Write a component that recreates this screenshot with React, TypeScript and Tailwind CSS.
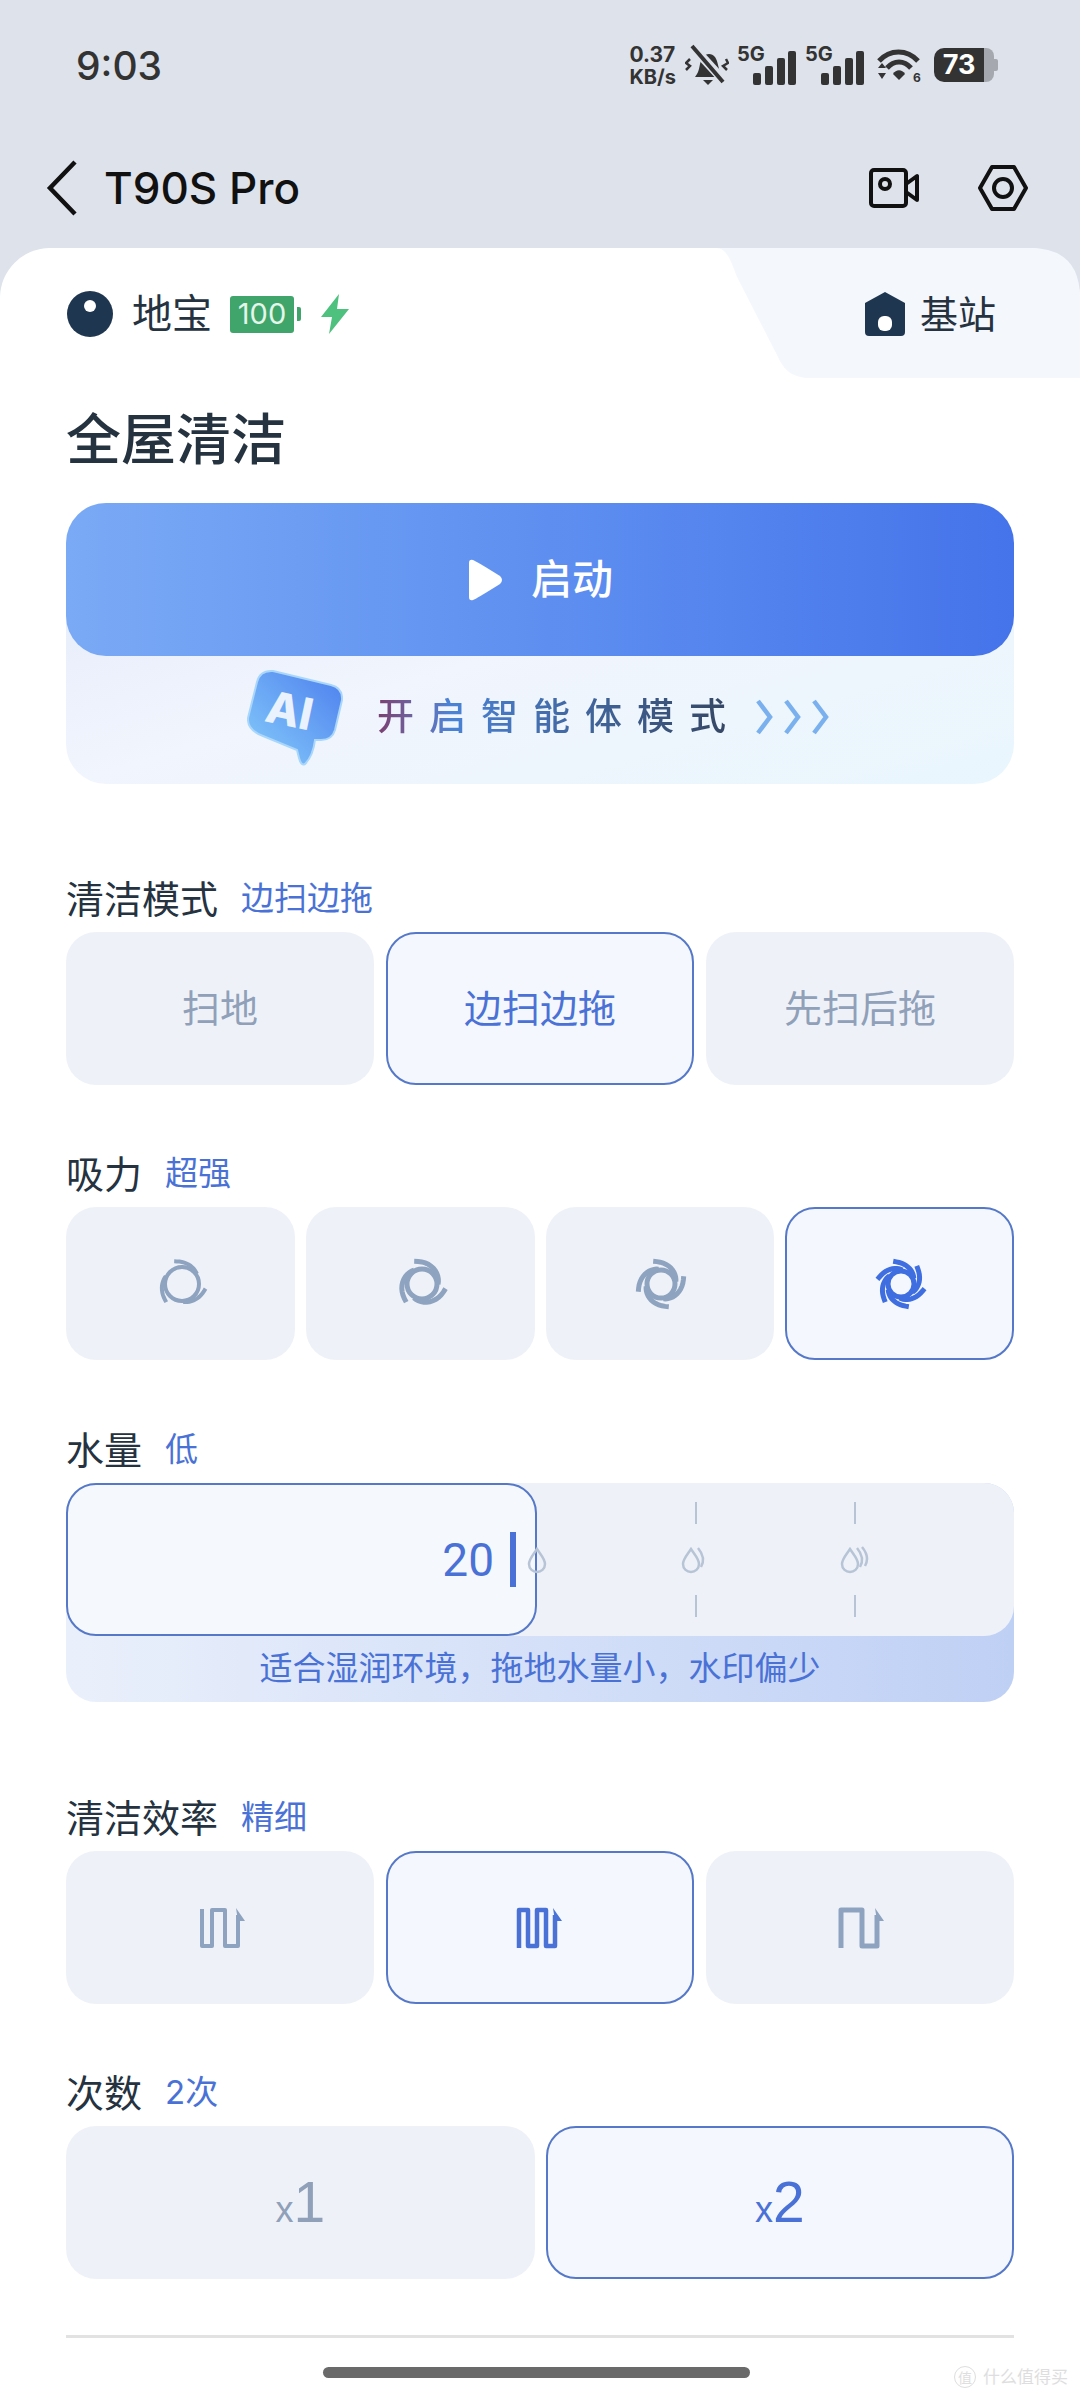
const cjk = { fontFamily: 'Inter, "Noto Sans CJK SC", sans-serif' }

const Bars = () => (
  <svg width="43" height="34" viewBox="0 0 43 34" fill="#333">
    <rect x="0" y="22" width="8" height="12" rx="2" />
    <rect x="12" y="15" width="8" height="19" rx="2" />
    <rect x="24" y="7" width="8" height="27" rx="2" />
    <rect x="35" y="0" width="8" height="34" rx="2" />
  </svg>
)

const StatusBar = () => (
  <div className="h-[128px] flex items-center justify-between pl-[76px] pr-[82px] pt-[2px]">
    <span className="text-[39px] font-medium text-[#333] leading-none">9:03</span>
    <div className="flex items-center gap-[9px] text-[#333]">
      <div className="flex flex-col font-bold text-[21px] leading-[22px] pt-[2px]">
        <span>0.37</span>
        <span className="text-[20px]">KB/s</span>
      </div>
      <svg width="44" height="42" viewBox="0 0 44 42" fill="none">
        <path d="M12 30 C15 26 14 18 18 13 C21 9 27 9 30 13 C33 17 33 24 36 30 L38 33 H10 Z" fill="#333" />
        <path d="M18 36 H28 L23 41 Z" fill="#333" />
        <path d="M7 2 L40 38" stroke="#dde2eb" strokeWidth="9" />
        <path d="M7 2 L38 38" stroke="#333" strokeWidth="4" />
        <path d="M5 15 L1 19 L5 22 L1 26" stroke="#333" strokeWidth="2.5" />
        <path d="M41 15 L43 19 L38 22 L42 26" stroke="#333" strokeWidth="2.5" />
      </svg>
      <div className="flex items-end gap-[9px] -ml-[1px]">
        <div className="relative w-[59px] h-[40px]">
          <span className="absolute left-0 -top-[2px] font-bold text-[20px] leading-[22px]">5G</span>
          <div className="absolute right-0 bottom-0"><Bars /></div>
        </div>
        <div className="relative w-[59px] h-[40px]">
          <span className="absolute left-0 -top-[2px] font-bold text-[20px] leading-[22px]">5G</span>
          <div className="absolute right-0 bottom-0"><Bars /></div>
        </div>
      </div>
      <svg width="46" height="36" viewBox="0 0 46 36" fill="none" className="ml-[3px]">
        <path d="M3 14 C14 2 31 2 42 14" stroke="#333" strokeWidth="5" />
        <path d="M11 21 C18 13 28 13 35 21" stroke="#333" strokeWidth="5" />
        <path d="M17 27 C20 22 26 22 29 27 L23 33 Z" fill="#333" />
        <path d="M2 21 L6 16 L10 21 Z M2 26 L10 26 L6 32 Z" fill="#333" />
        <text x="37" y="35" fontSize="12" fontWeight="700" fill="#333" fontFamily="Inter">6</text>
      </svg>
      <div className="flex items-center h-[34px] ml-[3px]">
        <div className="w-[50px] h-[34px] bg-[#333] rounded-l-[10px] flex items-center justify-center text-white font-bold text-[27px]">73</div>
        <div className="w-[10px] h-[34px] bg-[#a5a8ae] rounded-r-[8px]" />
        <div className="w-[4px] h-[12px] bg-[#a5a8ae] rounded-r-[2px]" />
      </div>
    </div>
  </div>
)

const NavBar = () => (
  <div className="h-[120px] flex items-center pl-[46px] pr-[52px]">
    <svg width="32" height="56" viewBox="0 0 32 56" fill="none">
      <path d="M29 2 L4 28 L29 54" stroke="#111" strokeWidth="4.5" />
    </svg>
    <span className="ml-[26px] text-[44px] font-medium text-[#111] leading-none">T90S Pro</span>
    <svg className="ml-auto" width="50" height="40" viewBox="0 0 50 40" fill="none" stroke="#111" strokeWidth="4" strokeLinejoin="round">
      <rect x="2" y="2" width="35" height="36" rx="3" />
      <circle cx="16" cy="16" r="5" />
      <path d="M37 16 L48 8 V32 L37 24" />
    </svg>
    <svg className="ml-[59px]" width="50" height="46" viewBox="0 0 50 46" fill="none" stroke="#111" strokeWidth="4" strokeLinejoin="round">
      <path d="M14 2 H36 L48 23 L36 44 H14 L2 23 Z" />
      <circle cx="25" cy="23" r="9" />
    </svg>
  </div>
)

const Label = ({ title, value }: { title: string; value: string }) => (
  <div className="h-[46px] mb-[10px] flex items-center">
    <span className="text-[38px] text-[#25323f]">{title}</span>
    <span className="ml-[23px] text-[33px] text-[#4a72d6]">{value}</span>
  </div>
)

const Option = ({ active, className, children }: { active?: boolean; className?: string; children: React.ReactNode }) => (
  <div
    className={`h-[153px] rounded-[30px] flex items-center justify-center ${className ?? ''} ${
      active ? 'border-2 border-[#5578c8] bg-[#f4f7fd] text-[#4a72d6]' : 'bg-[#eef2f8] text-[#8fa0b8]'
    }`}
  >
    {children}
  </div>
)

// spiral arm: starts at the outer tip, winds clockwise down onto the ring
const armPath = (start: number, sweep: number, outer: number, inner: number) => {
  const points = Array.from({ length: 13 }, (_, i) => {
    const t = i / 12
    const a = ((start + sweep * t) * Math.PI) / 180
    const r = outer + (inner - outer) * Math.pow(t, 0.8)
    return `${(30 + r * Math.cos(a)).toFixed(2)} ${(30 + r * Math.sin(a)).toFixed(2)}`
  })
  return `M${points.join(' L')}`
}

const Swirl = ({ arms, color, ring, width, sweep }: { arms: number; color: string; ring: number; width: number; sweep: number }) => (
  <svg className="ml-[3px]" width="60" height="60" viewBox="0 0 60 60" fill="none" stroke={color}>
    <circle cx="30" cy="30" r={ring} strokeWidth={width} />
    {Array.from({ length: arms }).map((_, i) => (
      <path key={i} d={armPath(-109 + (360 / arms) * i, sweep, 24, ring + 1)} strokeWidth={width} />
    ))}
  </svg>
)

const Drop = ({ level }: { level: number }) => (
  <svg width={level > 0 ? 32 : 22} height="28" viewBox={level > 0 ? '0 0 32 28' : '0 0 22 28'} fill="none" stroke="#b7c4d6" strokeWidth="2.5">
    <path d="M11 3 C7 9 3 13 3 18 C3 23 7 26 11 26 C15 26 19 23 19 18 C19 13 15 9 11 3 Z" />
    {level > 0 && <path d="M18 2 C23 8 25 14 21 21" />}
    {level > 1 && <path d="M23 1 C28 7 30 13 26 20" />}
  </svg>
)

const Tick = ({ level }: { level: number }) => (
  <div className="flex-1 relative">
    <div className="absolute left-0 top-0 h-full -translate-x-1/2 flex flex-col items-center pt-[19px] pb-[19px] justify-between">
      <div className={`w-[2px] h-[22px] ${level < 0 ? '' : 'bg-[#b7c4d6]'}`} />
      <Drop level={Math.max(level, 0)} />
      <div className={`w-[2px] h-[22px] ${level < 0 ? '' : 'bg-[#b7c4d6]'}`} />
    </div>
  </div>
)

const Wave = ({ d, color, width, className }: { d: string; color: string; width: number; className?: string }) => (
  <svg className={className} width="48" height="42" viewBox="0 0 48 42" fill="none">
    <path d={d} stroke={color} strokeWidth={width} strokeLinejoin="round" />
    <path d="M37 1 L46 14 H39 Z" fill={color} />
  </svg>
)

const Times = ({ n }: { n: number }) => (
  <span className="flex items-baseline">
    <span className="text-[36px] leading-none">x</span>
    <span className="text-[57px] leading-none">{n}</span>
  </span>
)

export default function App() {
  return (
    <div className="h-[2400px] w-[1080px] bg-[#dde2eb] flex flex-col overflow-hidden relative" style={cjk}>
      <StatusBar />
      <NavBar />

      <main className="flex-1 bg-white rounded-t-[50px] relative px-[66px] pt-[36px]">
        <svg className="absolute right-0 top-0" width="364" height="130" viewBox="0 0 364 130" fill="#f4f7fc">
          <path d="M0 0 H314 Q364 0 364 50 V130 H95 C76 130 68 122 62 109 L21 29 C14 10 10 0 0 0 Z" />
        </svg>

        <div className="relative h-[60px] flex items-center">
          <svg width="48" height="48" viewBox="0 0 48 48">
            <circle cx="24" cy="24" r="23" fill="#1f3650" />
            <circle cx="24" cy="16" r="6" fill="#fff" />
          </svg>
          <span className="ml-[18px] text-[40px] text-[#25323f]">地宝</span>
          <div className="ml-[18px] flex items-center">
            <div className="w-[64px] h-[37px] bg-[#3fa56a] rounded-[3px] text-[#e4f5ea] text-[29px] flex items-center justify-center">100</div>
            <div className="ml-[3px] w-[4px] h-[14px] bg-[#3fa56a] rounded-r-[2px]" />
          </div>
          <svg className="ml-[18px]" width="32" height="40" viewBox="0 0 32 40" fill="#4ec17e">
            <path d="M20 0 L2 23 H13 L10 40 L30 15 H18 Z" />
          </svg>
          <svg className="ml-auto" width="42" height="44" viewBox="0 0 42 44">
            <path d="M21 0 L41 11 V40 Q41 44 37 44 H5 Q1 44 1 40 V11 Z" fill="#1f3650" />
            <rect x="14" y="24" width="14" height="15" rx="6" fill="#fff" />
          </svg>
          <span className="ml-[14px] mr-[18px] text-[38px] text-[#25323f]">基站</span>
        </div>

        <h1 className="mt-[60px] h-[70px] flex items-center text-[55px] font-medium text-[#25323f]">全屋清洁</h1>

        <div className="mt-[29px] rounded-[40px] bg-gradient-to-br from-[#e3e9fb] via-[#f1f5fd] to-[#e9f6fd] h-[281px]">
          <div className="h-[153px] rounded-[40px] bg-gradient-to-r from-[#7aaaf5] to-[#4573ea] flex items-center justify-center">
            <svg width="36" height="42" viewBox="0 0 36 42" fill="#fff">
              <path d="M2 4 Q2 0 6 1 Q9 2 33 17 Q37 21 33 25 Q9 40 6 41 Q2 42 2 38 Z" />
            </svg>
            <span className="ml-[28px] text-[41px] font-medium text-white">启动</span>
          </div>
          <div className="h-[128px] flex items-center justify-center -mt-[3px] pl-[2px]">
            <svg width="96" height="98" viewBox="0 0 96 98">
              <defs>
                <linearGradient id="ai" x1="1" y1="0" x2="0" y2="1">
                  <stop offset="0" stopColor="#4d7fee" />
                  <stop offset="1" stopColor="#86cdfb" />
                </linearGradient>
              </defs>
              <path
                d="M26 3 L84 17 Q96 20 95 32 L88 62 Q85 72 74 72 L68 72 Q66 88 58 96 Q54 98 52 90 L50 82 L16 68 Q0 62 1 50 L10 14 Q13 2 26 3 Z"
                fill="url(#ai)"
                stroke="#a9d6fb"
                strokeWidth="2"
              />
              <text x="19" y="58" fontSize="44" fontWeight="800" fill="#eaf2fd" fontFamily="Inter" transform="rotate(12 42 44)">AI</text>
            </svg>
            <span className="ml-[34px] text-[37px] font-medium tracking-[15px] text-transparent bg-clip-text bg-gradient-to-r from-[#7a3f6f] via-[#4a83d6] via-20% to-[#34445f]">
              开启智能体模式
            </span>
            <svg className="ml-[14px]" width="80" height="36" viewBox="0 0 80 36" fill="none" stroke="#7ab0ee" strokeWidth="4.5">
              <path d="M3 2 L15 18 L3 34 M31 2 L43 18 L31 34 M59 2 L71 18 L59 34" />
            </svg>
          </div>
        </div>

        <section className="mt-[92px]">
          <Label title="清洁模式" value="边扫边拖" />
          <div className="grid grid-cols-3 gap-[12px] text-[38px]">
            <Option>扫地</Option>
            <Option active>边扫边拖</Option>
            <Option>先扫后拖</Option>
          </div>
        </section>

        <section className="mt-[66px]">
          <Label title="吸力" value="超强" />
          <div className="grid grid-cols-4 gap-[11px]">
            <Option><Swirl arms={3} color="#8ea3bf" ring={17} width={4} sweep={75} /></Option>
            <Option><Swirl arms={3} color="#8ea3bf" ring={15} width={5} sweep={110} /></Option>
            <Option><Swirl arms={4} color="#8ea3bf" ring={14} width={5} sweep={100} /></Option>
            <Option active><Swirl arms={6} color="#3f6ee0" ring={13} width={5} sweep={85} /></Option>
          </div>
        </section>

        <section className="mt-[67px]">
          <Label title="水量" value="低" />
          <div className="h-[219px] rounded-[30px] bg-gradient-to-r from-[#eaf0fb] to-[#bfd0f5]">
            <div className="h-[153px] rounded-[30px] bg-[#eef2f8] flex">
              <div className="w-[471px] rounded-[30px] border-2 border-[#5578c8] bg-[#f5f8fd] flex items-center justify-end pr-[19px] text-[#4a72d6]">
                <span className="text-[46px] leading-none" style={{ fontFamily: 'Roboto, sans-serif' }}>20</span>
                <div className="ml-[16px] w-[6px] h-[55px] bg-[#4a72d6]" />
              </div>
              <Tick level={-1} />
              <Tick level={1} />
              <Tick level={2} />
            </div>
            <div className="h-[66px] flex items-center justify-center text-[33px] text-[#4a72d6]">
              适合湿润环境，拖地水量小，水印偏少
            </div>
          </div>
        </section>

        <section className="mt-[93px]">
          <Label title="清洁效率" value="精细" />
          <div className="grid grid-cols-3 gap-[12px]">
            <Option><Wave className="ml-[6px]" d="M3 2 V39 H13 V3 H26 V39 H39 V8" color="#8ea3bf" width={4} /></Option>
            <Option active><Wave d="M3 41 V3 H12 V39 H21 V3 H30 V39 H39 V8" color="#4a72d6" width={4.5} /></Option>
            <Option><Wave className="ml-[3px]" d="M3 41 V3 H24 V39 H39 V8" color="#8ea3bf" width={5} /></Option>
          </div>
        </section>

        <section className="mt-[66px]">
          <Label title="次数" value="2次" />
          <div className="grid grid-cols-2 gap-[11px]" style={{ fontFamily: '"Liberation Sans", sans-serif' }}>
            <Option><Times n={1} /></Option>
            <Option active><Times n={2} /></Option>
          </div>
        </section>

        <div className="mt-[56px] h-[3px] bg-[#e2e2e2]" />
        <div className="mt-[29px] ml-[257px] w-[427px] h-[11px] rounded-full bg-[#6a6a6a]" />
      </main>

      <div className="absolute right-[12px] bottom-[10px] flex items-center text-[17px] text-[#dedede]">
        <div className="w-[22px] h-[22px] rounded-full border border-[#dedede] text-[14px] flex items-center justify-center mr-[7px]">值</div>
        什么值得买
      </div>
    </div>
  )
}
